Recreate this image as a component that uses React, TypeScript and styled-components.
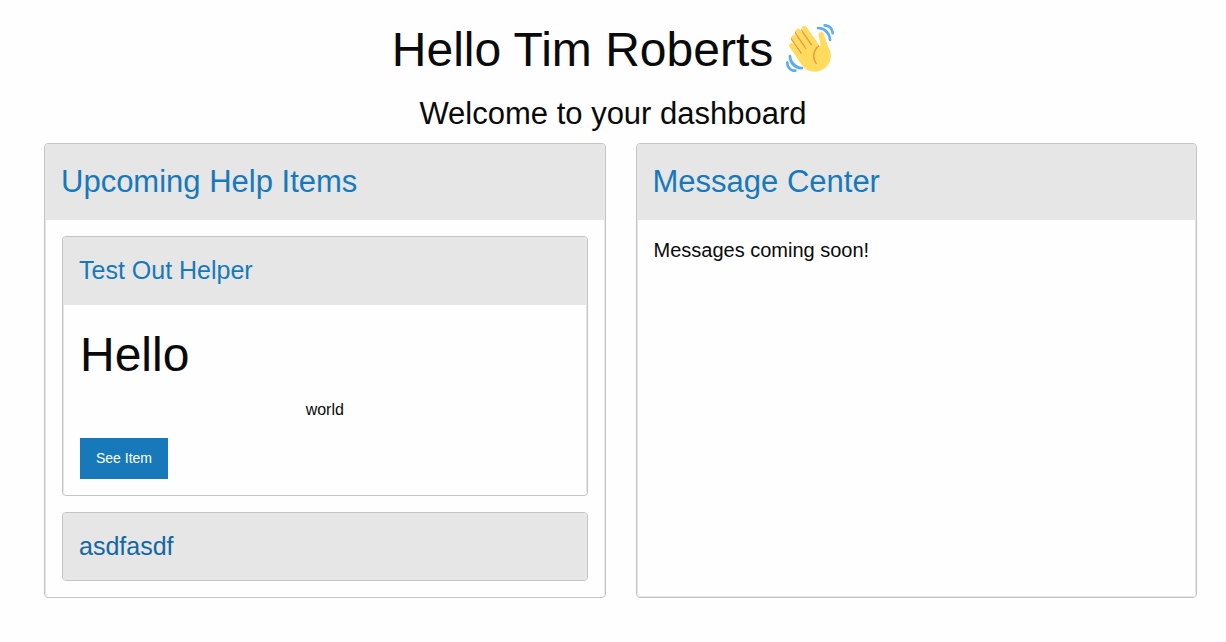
import React, { useState } from "react";
import styled, { createGlobalStyle } from "styled-components";

const GlobalStyle = createGlobalStyle`
  *, *::before, *::after { box-sizing: border-box; }
  body {
    margin: 0;
    background: #fefefe;
    color: #0a0a0a;
    font-family: "Liberation Sans", Arial, sans-serif;
    font-size: 16px;
    line-height: 24px;
  }
  h1, h2, h3, p { margin: 0; font-weight: 400; }
`;

const Page = styled.main`
  padding: 16px 0 32px;
`;

const Title = styled.h1<{ $centered?: boolean }>`
  display: flex;
  align-items: center;
  justify-content: ${(p) => (p.$centered ? "center" : "flex-start")};
  gap: 13px;
  margin-bottom: 8px;
  font-size: 48px;
  line-height: 67px;
`;

const Subtitle = styled.p`
  margin-bottom: 6px;
  font-size: 31px;
  line-height: 46px;
  text-align: center;
`;

const Columns = styled.div`
  display: grid;
  grid-template-columns: repeat(auto-fit, minmax(min(100%, 400px), 1fr));
  gap: 30px;
  padding: 0 29px 0 44px;
`;

const Card = styled.section`
  display: flex;
  flex-direction: column;
  overflow: hidden;
  border: 1px solid #c4c4c4;
  border-radius: 4px;
`;

const CardTitle = styled.h2<{ $small?: boolean }>`
  padding: 16px;
  background: #e6e6e6;
  color: #1779ba;
  font-size: ${(p) => (p.$small ? 25 : 31)}px;
  line-height: ${(p) => (p.$small ? 35 : 43)}px;
`;

const Toggle = styled.button<{ $active?: boolean }>`
  display: block;
  width: 100%;
  padding: 0;
  border: 0;
  background: none;
  color: ${(p) => (p.$active ? "#1468a0" : "#1779ba")};
  font: inherit;
  text-align: left;
  cursor: pointer;
`;

const CardBody = styled.div<{ $closed?: boolean }>`
  display: flex;
  flex: 1;
  flex-direction: column;
  gap: 16px;
  padding: 16px;
  border: 1px solid #e6e6e6;
  border-bottom-width: ${(p) => (p.$closed ? 1 : 0)}px;
`;

const Message = styled.p`
  font-size: 20px;
  line-height: 28px;
`;

const ItemContent = styled.div`
  display: flex;
  flex-direction: column;
  align-items: stretch;
`;

const Paragraph = styled.p`
  margin-bottom: 14px;
  line-height: 28px;
  text-align: center;
`;

const ActionButton = styled.button`
  align-self: flex-start;
  padding: 12px 16px;
  border: 0;
  background: #1779ba;
  color: #fefefe;
  font-family: inherit;
  font-size: 14px;
  line-height: 17px;
  cursor: pointer;
`;

const WaveIcon = styled.svg`
  flex: none;
  width: 48px;
  height: 48px;
  margin-bottom: 4px;
`;

function WavingHand() {
  return (
    <WaveIcon viewBox="0 0 36 36" role="img" aria-label="waving hand">
      <path
        fill="#EF9645"
        d="M4.861 9.147c.94-.657 2.357-.531 3.201.166l-.968-1.407c-.779-1.111-.5-2.313.612-3.093 1.112-.777 4.263 1.312 4.263 1.312-.786-1.122-.639-2.544.483-3.331 1.122-.784 2.67-.513 3.456.611l10.292 14.72L25 31l-11.083-4.042L4.25 12.625c-.793-1.129-.519-2.686.611-3.478z"
      />
      <path
        fill="#FFDC5D"
        d="M2.695 17.336s-1.132-1.65.519-2.781c1.649-1.131 2.78.518 2.78.518l5.251 7.658c.181-.302.379-.6.6-.894L4.557 11.21s-1.131-1.649.519-2.78c1.649-1.131 2.78.518 2.78.518l6.855 9.997c.255-.208.516-.417.785-.622L7.549 6.732s-1.131-1.649.519-2.78c1.649-1.131 2.78.518 2.78.518l7.947 11.589c.292-.179.581-.334.871-.498L12.238 4.729s-1.131-1.649.518-2.78c1.649-1.131 2.78.518 2.78.518l7.854 11.454 1.194 1.742c-4.948 3.394-5.419 9.779-2.592 13.902.565.825 1.39.26 1.39.26-3.393-4.949-2.357-10.51 2.592-13.903L24.515 8.62s-.545-1.924 1.378-2.47c1.924-.545 2.47 1.379 2.47 1.379l1.685 5.004c.668 1.984 1.379 3.961 2.32 5.831 2.657 5.28 1.07 11.842-3.94 15.279-5.465 3.747-12.936 2.354-16.684-3.11L2.695 17.336z"
      />
      <g fill="#5DADEC">
        <path d="M12 32.042C8 32.042 3.958 28 3.958 24c0-.553-.405-1-.958-1s-1.042.447-1.042 1C1.958 30 6 34.042 12 34.042c.553 0 1-.489 1-1.042s-.447-.958-1-.958z" />
        <path d="M7 34c-3 0-5-2-5-5 0-.553-.447-1-1-1s-1 .447-1 1c0 4 3 7 7 7 .553 0 1-.447 1-1s-.447-1-1-1zM24 2c-.552 0-1 .448-1 1s.448 1 1 1c4 0 8 3.589 8 8 0 .552.448 1 1 1s1-.448 1-1c0-5.514-4-10-10-10z" />
        <path d="M29 .042c-.552 0-1 .406-1 .958s.448 1.042 1 1.042c3 0 4.958 2.225 4.958 4.958 0 .552.489 1 1.042 1s.958-.448.958-1C35.958 3.163 33 .042 29 .042z" />
      </g>
    </WaveIcon>
  );
}

interface HelpItemProps {
  title: string;
  defaultOpen?: boolean;
  active?: boolean;
  children?: React.ReactNode;
}

function HelpItem({ title, defaultOpen = false, active, children }: HelpItemProps) {
  const [open, setOpen] = useState(defaultOpen);
  return (
    <Card>
      <CardTitle as="h3" $small>
        <Toggle $active={active} aria-expanded={open} onClick={() => setOpen(!open)}>
          {title}
        </Toggle>
      </CardTitle>
      {open && <CardBody>{children}</CardBody>}
    </Card>
  );
}

export default function App() {
  return (
    <>
      <GlobalStyle />
      <Page>
        <Title $centered>
          Hello Tim Roberts
          <WavingHand />
        </Title>
        <Subtitle>Welcome to your dashboard</Subtitle>
        <Columns>
          <Card>
            <CardTitle>Upcoming Help Items</CardTitle>
            <CardBody>
              <HelpItem title="Test Out Helper" defaultOpen>
                <ItemContent>
                  <Title>Hello</Title>
                  <Paragraph>world</Paragraph>
                  <ActionButton>See Item</ActionButton>
                </ItemContent>
              </HelpItem>
              <HelpItem title="asdfasdf" active />
            </CardBody>
          </Card>
          <Card>
            <CardTitle>Message Center</CardTitle>
            <CardBody $closed>
              <Message>Messages coming soon!</Message>
            </CardBody>
          </Card>
        </Columns>
      </Page>
    </>
  );
}
